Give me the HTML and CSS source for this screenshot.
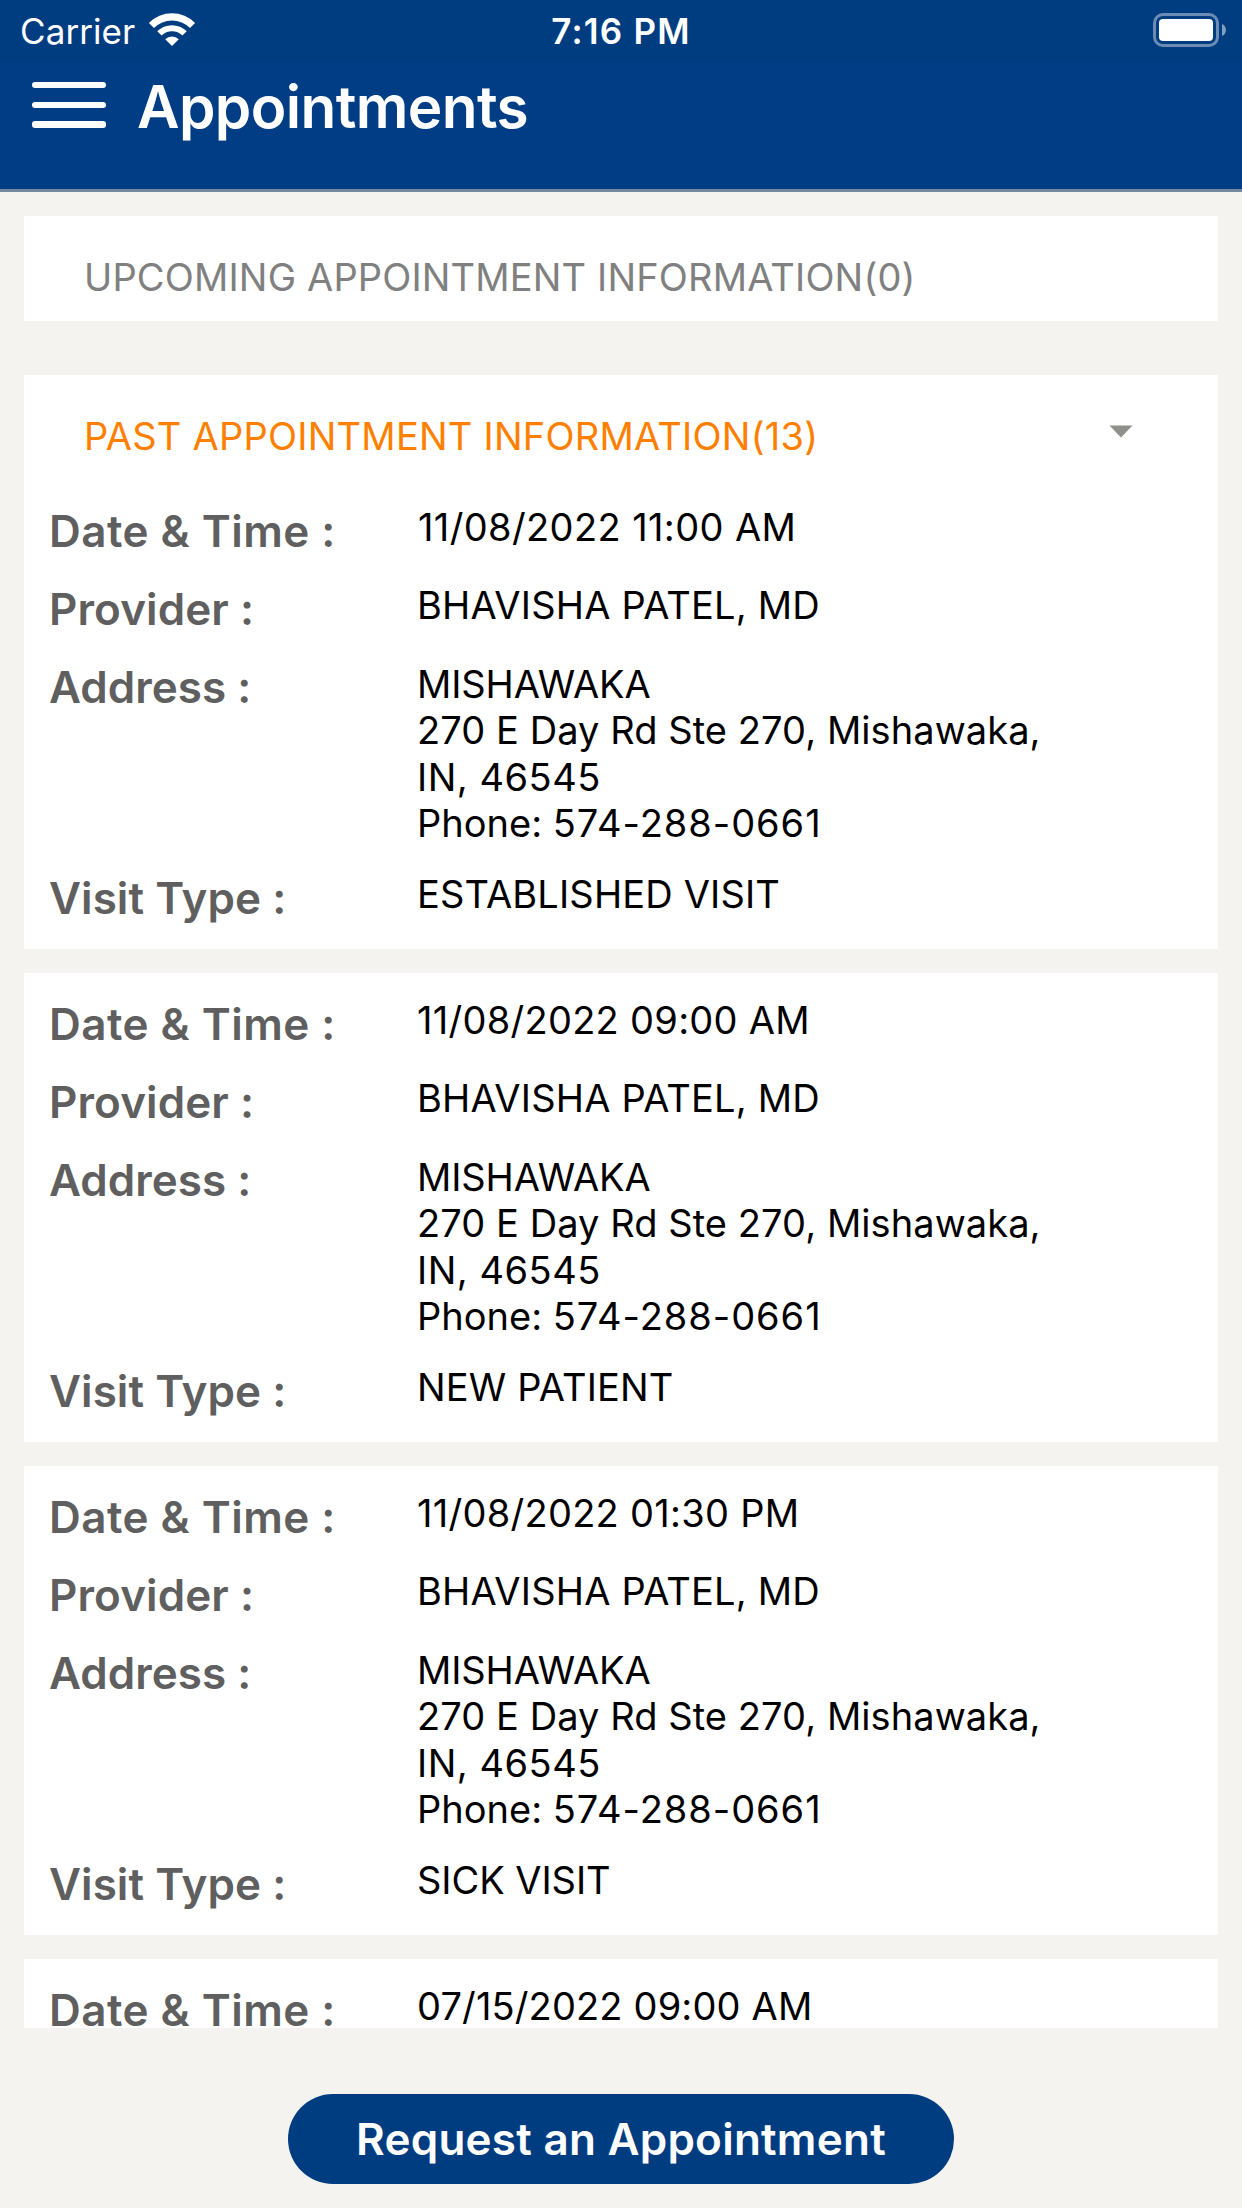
FILE: index.html
```html
<!DOCTYPE html>
<html lang="en">
<head>
<meta charset="utf-8">
<title>Appointments</title>
<link rel="stylesheet" href="styles.css">
</head>
<body>
<div class="screen">
  <div class="status-bar">
    <div class="status-left">
      <span class="carrier">Carrier</span>
      <svg class="wifi" width="48" height="34" viewBox="0 0 48 34" fill="#fff">
        <path d="M0.9 9.9A32.6 32.6 0 0 1 47.1 9.9L42 15A25.5 25.5 0 0 0 6 15Z"/>
        <path d="M9.2 18.2A21.2 21.2 0 0 1 38.8 18.2L34.4 22.6A14.8 14.8 0 0 0 13.6 22.6Z"/>
        <path d="M17.2 26.2A9.7 9.7 0 0 1 30.8 26.2L24 33Z"/>
      </svg>
    </div>
    <span class="clock">7:16 PM</span>
    <svg class="battery" width="74" height="34" viewBox="0 0 74 34">
      <rect x="1.5" y="1.5" width="63" height="31" rx="8.5" fill="none" stroke="#fff" stroke-opacity=".42" stroke-width="3"/>
      <rect x="6" y="6" width="54" height="22" rx="4" fill="#fff"/>
      <path d="M69 11c5.300 2.200 5.300 9.800 0 12z" fill="#fff" fill-opacity=".5"/>
    </svg>
  </div>

  <header class="nav-bar">
    <div class="menu"><i></i><i></i><i></i></div>
    <h1>Appointments</h1>
  </header>

  <main class="list">
    <section class="card upcoming">
      <h2 class="section-title">UPCOMING APPOINTMENT INFORMATION(0)</h2>
    </section>

    <section class="card">
      <h2 class="section-title active">PAST APPOINTMENT INFORMATION(13)
        <svg class="caret" width="24" height="13" viewBox="0 0 24 13"><path d="M0.500 0.500H23.500L12 12.500Z" fill="#8f8f8b"/></svg>
      </h2>
      <dl class="details">
        <dt class="l-date">Date &amp; Time :</dt><dd class="date d1">11/08/2022 11:00 AM</dd>
        <dt>Provider :</dt><dd class="provider">BHAVISHA PATEL, MD</dd>
        <dt class="l-address">Address :</dt>
        <dd class="address"><span class="city">MISHAWAKA</span><span>270 E Day Rd Ste 270, Mishawaka,</span><span class="zip">IN, 46545</span><span class="phone">Phone: <b>574-288-0661</b></span></dd>
        <dt class="l-visit">Visit Type :</dt><dd>ESTABLISHED VISIT</dd>
      </dl>
    </section>

    <section class="card">
      <dl class="details">
        <dt class="l-date">Date &amp; Time :</dt><dd class="date">11/08/2022 09:00 AM</dd>
        <dt>Provider :</dt><dd class="provider">BHAVISHA PATEL, MD</dd>
        <dt class="l-address">Address :</dt>
        <dd class="address"><span class="city">MISHAWAKA</span><span>270 E Day Rd Ste 270, Mishawaka,</span><span class="zip">IN, 46545</span><span class="phone">Phone: <b>574-288-0661</b></span></dd>
        <dt class="l-visit">Visit Type :</dt><dd>NEW PATIENT</dd>
      </dl>
    </section>

    <section class="card">
      <dl class="details">
        <dt class="l-date">Date &amp; Time :</dt><dd class="date">11/08/2022 01:30 PM</dd>
        <dt>Provider :</dt><dd class="provider">BHAVISHA PATEL, MD</dd>
        <dt class="l-address">Address :</dt>
        <dd class="address"><span class="city">MISHAWAKA</span><span>270 E Day Rd Ste 270, Mishawaka,</span><span class="zip">IN, 46545</span><span class="phone">Phone: <b>574-288-0661</b></span></dd>
        <dt class="l-visit">Visit Type :</dt><dd class="tight">SICK VISIT</dd>
      </dl>
    </section>

    <section class="card partial">
      <dl class="details">
        <dt class="l-date">Date &amp; Time :</dt><dd>07/15/2022 09:00 AM</dd>
      </dl>
    </section>
  </main>

  <footer class="footer">
    <button class="request" type="button">Request an Appointment</button>
  </footer>
</div>
</body>
</html>
```
FILE: styles.css
```css
* { box-sizing: border-box; margin: 0; padding: 0; }

body {
  background: #f4f3ef;
  font-family: Inter, "Liberation Sans", sans-serif;
  color: #000;
}

.screen {
  display: flex;
  flex-direction: column;
  width: 1242px;
  height: 2208px;
  overflow: hidden;
}

.status-bar {
  display: grid;
  grid-template-columns: 1fr auto 1fr;
  align-items: start;
  height: 60px;
  padding: 13px 15px 0 20px;
  background: #003c80;
  color: #fff;
  font-size: 35px;
  line-height: 37px;
}
.status-left { display: flex; gap: 13px; }
.carrier { letter-spacing: 0.08px; }
.clock { font-weight: 600; letter-spacing: 1.2px; margin-right: 5px; }
.battery { justify-self: end; }

.nav-bar {
  display: flex;
  align-items: flex-start;
  flex: none;
  height: 132px;
  padding-left: 32px;
  background: #003d84;
  border-bottom: 3px solid #74889f;
  color: #fff;
}
.menu {
  display: grid;
  gap: 13.5px;
  width: 74px;
  margin: 22px 31px 0 0;
}
.menu i { height: 6.200px; border-radius: 3px; background: #fff; }
h1 {
  font-size: 58.500px;
  font-weight: 600;
  line-height: 70px;
  letter-spacing: -0.6px;
  margin-top: 12px;
}

.list {
  display: flex;
  flex-direction: column;
  gap: 24px;
  height: 1836px;
  padding: 24px 24px 0;
  overflow: hidden;
}
.card { flex: none; background: #fff; }
.upcoming { margin-bottom: 30px; }

.section-title {
  display: flex;
  justify-content: space-between;
  height: 105px;
  padding: 38px 85px 0 60px;
  font-size: 38px;
  font-weight: 400;
  line-height: 46px;
  letter-spacing: 0.16px;
  color: #808080;
}
.section-title.active { color: #ff8000; letter-spacing: 0.24px; }
.caret { margin-top: 12px; }

.details {
  display: grid;
  grid-template-columns: 368px 1fr;
  row-gap: 24px;
  padding: 24px 100px 24px 25px;
}
dt {
  font-size: 44px;
  font-weight: 600;
  line-height: 54px;
  letter-spacing: 0.1px;
  color: #5f5f5f;
}
dd {
  font-size: 38px;
  line-height: 46.500px;
  letter-spacing: 0.15px;
}
.l-date { letter-spacing: 0.46px; }
.l-address { letter-spacing: 0; }
.l-visit { letter-spacing: 0.05px; }
.date { letter-spacing: 0.28px; }
.d1 { letter-spacing: 0.38px; padding-left: 1px; }
.provider { letter-spacing: 0.2px; }
.tight { letter-spacing: -0.06px; }
.address { height: 187px; padding-top: 1px; line-height: 46.330px; letter-spacing: 0.07px; }
.address span { display: block; }
.address .city { letter-spacing: -0.1px; }
.address .zip { letter-spacing: 0.5px; }
.address .phone { letter-spacing: 0; }
.address b { font-weight: 400; letter-spacing: 0.95px; }

.partial { height: 69px; overflow: hidden; }

.footer { display: flex; justify-content: center; padding-top: 66px; }
.request {
  width: 666px;
  height: 90px;
  border: 0;
  border-radius: 45px;
  background: #003c80;
  color: #fff;
  font: 600 44px/54px Inter, "Liberation Sans", sans-serif;
  letter-spacing: 0.25px;
}
```
